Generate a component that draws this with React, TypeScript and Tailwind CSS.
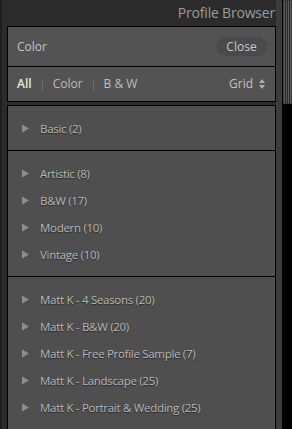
import { ReactNode } from 'react';

const BASIC = ['Basic (2)'];
const CREATIVE = ['Artistic (8)', 'B&W (17)', 'Modern (10)', 'Vintage (10)'];
const USER = [
  'Matt K - 4 Seasons (20)',
  'Matt K - B&W (20)',
  'Matt K - Free Profile Sample (7)',
  'Matt K - Landscape (25)',
  'Matt K - Portrait & Wedding (25)',
];

function Arrow() {
  return (
    <svg width="8" height="9" viewBox="0 0 8 9" className="shrink-0">
      <polygon points="0,0.5 7,4.5 0,8.5" fill="#8e8e8e" />
    </svg>
  );
}

function Row({ label }: { label: string }) {
  return (
    <div className="flex h-[27px] items-center pl-[14px]">
      <Arrow />
      <span className="ml-[10px] text-[11.5px] tracking-[-0.3px] text-[#b9b9b9] [text-shadow:0_1px_1px_rgba(0,0,0,0.55)]">
        {label}
      </span>
    </div>
  );
}

function Section({ items, last }: { items: string[]; last?: boolean }) {
  return (
    <div className={last ? 'pt-[9px]' : 'pt-[9px] pb-[8px] border-b border-black'}>
      {items.map((it) => (
        <Row key={it} label={it} />
      ))}
    </div>
  );
}

function Sep() {
  return <div className="mx-[10px] h-[13px] w-px bg-[#6a6a6a]" />;
}

function Panel({ children, className }: { children: ReactNode; className?: string }) {
  return <div className={'border border-black ' + (className ?? '')}>{children}</div>;
}

export default function App() {
  return (
    <div
      className="flex h-[429px] w-[292px] overflow-hidden bg-[#2b2b2b]"
      style={{ fontFamily: '"Open Sans", "Noto Sans", sans-serif' }}
    >
      {/* main column */}
      <div className="flex w-[276px] flex-col border-l-2 border-[#1e1e1e] pl-[5px]">
        <div className="flex h-[26px] items-start justify-end pr-[1px] pt-[3px] text-[14px] leading-[20px] tracking-[-0.2px] text-[#9c9c9c]">
          Profile Browser
        </div>

        <Panel className="bg-[#535353]">
          <div className="flex h-[39px] items-center justify-between pl-[9px] pr-[8px]">
            <span className="text-[12px] text-[#c4c4c4]">Color</span>
            <button className="h-[19px] w-[51px] rounded-full bg-[#4a4a4a] text-[12px] text-[#c8c8c8]">
              Close
            </button>
          </div>
          <div className="flex h-[35px] items-center justify-between border-t border-black pl-[9px] pr-[10px] text-[12px]">
            <div className="flex items-center">
              <span className="font-semibold text-[#e4e4e4]">All</span>
              <Sep />
              <span className="text-[#bdbdbd]">Color</span>
              <Sep />
              <span className="text-[#bdbdbd]">B &amp; W</span>
            </div>
            <div className="flex items-center gap-[6px] text-[#c4c4c4]">
              <span>Grid</span>
              <svg width="6" height="10" viewBox="0 0 6 10">
                <polygon points="0,4 3,0 6,4" fill="#b0b0b0" />
                <polygon points="0,6 3,10 6,6" fill="#b0b0b0" />
              </svg>
            </div>
          </div>
        </Panel>

        <Panel className="mt-[3px] flex-1 border-b-0 bg-[#4f4f4f]">
          <Section items={BASIC} />
          <Section items={CREATIVE} />
          <Section items={USER} last />
        </Panel>
      </div>

      {/* scroll gutter */}
      <div className="w-[6px] bg-[#3c3c3c]" />
      <div className="flex w-[10px] flex-col bg-black pl-[1px]">
        <div className="h-[104px] w-[9px] border border-[#3a3a3a] bg-[repeating-linear-gradient(90deg,#5c5c5c_0_1px,#262626_1px_2px)]" />
      </div>
    </div>
  );
}
